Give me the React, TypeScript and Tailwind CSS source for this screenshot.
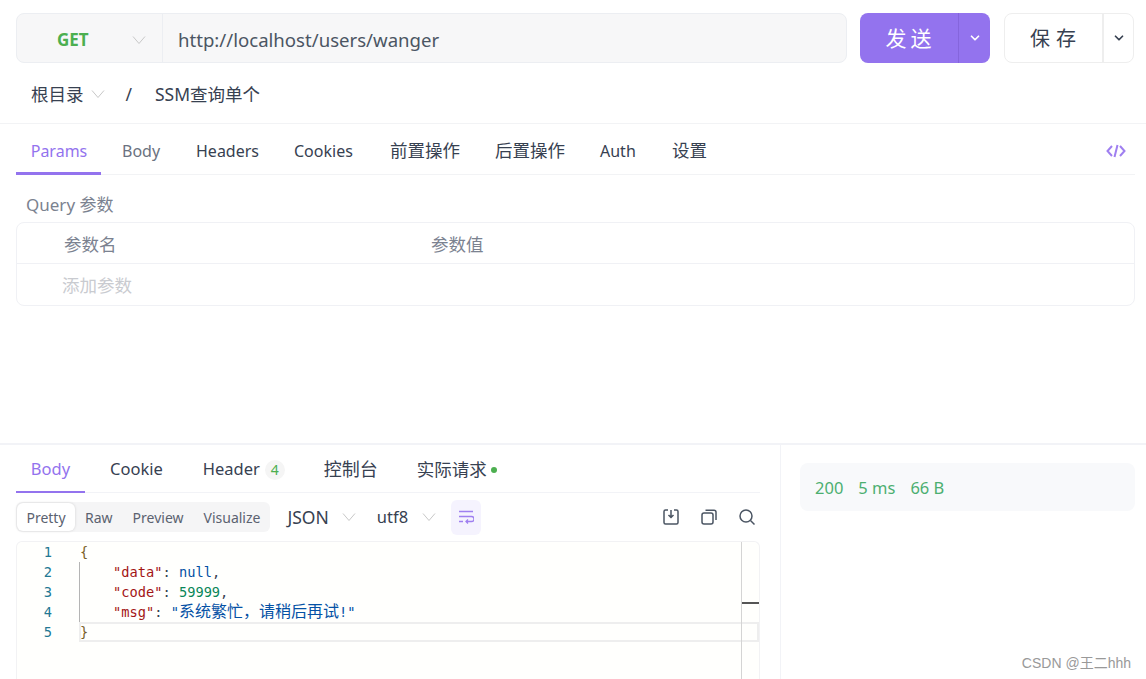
import { ChevronDown } from "lucide-react";

const font = "font-['Noto_Sans','Noto_Sans_CJK_SC',sans-serif]";

const requestTabs = [
  { label: "Body", className: "w-[74px] text-[16px] text-[#6b7280]" },
  { label: "Headers", className: "w-[98px] text-[16px]" },
  { label: "Cookies", className: "w-[96px] text-[16px]" },
  { label: "前置操作", className: "w-[105px] text-[17.500px]" },
  { label: "后置操作", className: "w-[105px] text-[17.500px]" },
  { label: "Auth", className: "w-[72px] text-[16px]" },
  { label: "设置", className: "w-[70px] text-[17.500px]" },
];

function Chevron({ className }: { className: string }) {
  return (
    <svg viewBox="0 0 14 10" fill="none" stroke="currentColor" strokeWidth="1" className={className}>
      <path d="M1 1.500 7 8.500 13 1.500" />
    </svg>
  );
}

function CodeLine({ n, children, guide }: { n: number; children?: React.ReactNode; guide?: boolean }) {
  return (
    <div className="flex h-5 items-center">
      <span className="w-[35px] text-right text-[#237893]">{n}</span>
      <span className={`ml-[27px] h-5 border-l whitespace-pre ${guide ? "border-[#b4b4b4]" : "border-transparent"}`}>{children}</span>
    </div>
  );
}

export default function App() {
  return (
    <div className={`${font} relative h-[679px] w-[1146px] overflow-hidden bg-white text-[#374151]`}>
      {/* Top bar */}
      <div className="flex gap-[13px] pl-4 pr-3 pt-[13px]">
        <div className="flex h-[50px] w-[831px] items-center rounded-lg border border-[#eceef2] bg-[#f7f7f8]">
          <div className="flex h-full w-[146px] shrink-0 items-center border-r border-[#eceef2] pt-[3px]">
            <span className="ml-[40px] text-[17px] font-bold text-[#4caf50]">GET</span>
            <Chevron className="ml-[43px] h-[10px] w-[14px] text-[#c8c8c8]" />
          </div>
          <span className="pl-[15px] pt-[3px] text-[18.600px] text-[#4b5563]">http://localhost/users/wanger</span>
        </div>
        <div className="flex h-[50px] w-[130px] rounded-lg bg-[#9373ee] text-white">
          <div className="flex w-[99px] items-center justify-center border-r border-[#8565dc] pl-[3px] pt-px text-[21px] tracking-[4px]">发送</div>
          <div className="flex flex-1 items-center justify-center">
            <ChevronDown size={14} strokeWidth={3} />
          </div>
        </div>
        <div className="ml-px flex h-[50px] w-[130px] rounded-lg border border-[#eeeeee]">
          <div className="flex w-[99px] items-center justify-center border-r-2 border-[#eeeeee] pl-[5px] pt-px text-[20px] tracking-[6px]">保存</div>
          <div className="flex flex-1 items-center justify-center">
            <ChevronDown size={14} strokeWidth={3} />
          </div>
        </div>
      </div>

      {/* Breadcrumb */}
      <div className="flex h-[61px] items-center border-b border-[#f2f3f5] pl-[31px] pt-[2px] text-[17.500px]">
        <span>根目录</span>
        <Chevron className="ml-[7px] h-[10px] w-[14px] text-[#c8c8c8]" />
        <span className="ml-[21px]">/</span>
        <span className="ml-[23px]">SSM查询单个</span>
      </div>

      {/* Request tabs */}
      <div className="ml-4 mr-[11px] flex h-[51px] items-center border-b border-[#f2f3f5] pt-[3px]">
        <div className="-mb-px -mt-[3px] flex h-[51px] w-[85px] items-center justify-center border-b-[3px] border-[#9373ee] pl-px pt-[5px] text-[16px] text-[#9373ee]">Params</div>
        <div className="flex items-center pl-[21px]">
          {requestTabs.map((tab) => (
            <span key={tab.label} className={tab.className}>{tab.label}</span>
          ))}
        </div>
        <svg viewBox="0 0 20 14" fill="none" stroke="#9f7ff0" strokeWidth="2" className="ml-auto mr-[9px] h-[14px] w-5">
          <path d="M6 2 1.500 7 6 12M14 2l4.500 5L14 12M11.500 1 8.500 13" />
        </svg>
      </div>

      {/* Query params */}
      <div className="pl-4 pr-[11px]">
        <div className="flex h-[47px] items-end pb-[5px] pl-[10px] text-[17px] text-[#7b8290]">Query 参数</div>
        <div className="h-[84px] rounded-lg border border-[#f0f1f5] text-[17.500px]">
          <div className="flex h-[41px] items-center border-b border-[#f0f1f5] pl-[47px] pt-[3px] text-[#7b8290]">
            <span className="w-[367px]">参数名</span>
            <span>参数值</span>
          </div>
          <div className="flex h-[41px] items-center pl-[45px] pt-[2px] text-[#c9cbd0]">添加参数</div>
        </div>
      </div>

      {/* Response */}
      <div className="mt-[137px] flex h-[236px] border-t-2 border-[#f2f3f7]">
        <div className="w-[781px] shrink-0 border-r border-[#f2f3f7] pl-4 pr-5">
          <div className="flex h-[48px] items-center border-b border-[#f2f3f7] pt-[2px] text-[16.500px]">
            <div className="-mb-px -mt-[2px] flex h-[48px] w-[69px] items-center justify-center border-b-2 border-[#9373ee] pt-[2px] text-[#9373ee]">Body</div>
            <span className="ml-[25px]">Cookie</span>
            <span className="ml-10">Header</span>
            <span className="ml-[5px] flex h-5 w-5 items-center justify-center rounded-full bg-[#f5f5f5] text-[14px] text-[#4caf50]">4</span>
            <span className="ml-[39px] text-[18px]">控制台</span>
            <span className="ml-[39px] text-[17.500px]">实际请求</span>
            <span className="ml-1 h-[6px] w-[6px] rounded-full bg-[#4caf50]" />
          </div>

          <div className="flex h-[48px] items-center">
            <div className="flex h-[30px] items-center rounded-md bg-[#f5f5f6] text-[14px] text-[#5b6270]">
              <span className="ml-px flex h-7 w-[58px] items-center justify-center rounded-md bg-white shadow-[0_0_3px_rgba(0,0,0,0.15)]">Pretty</span>
              <span className="ml-[10px]">Raw</span>
              <span className="ml-5">Preview</span>
              <span className="ml-5 mr-[10px]">Visualize</span>
            </div>
            <span className="ml-[17px] text-[17.500px]">JSON</span>
            <Chevron className="ml-[13px] h-[10px] w-[14px] text-[#c8c8c8]" />
            <span className="ml-[21px] text-[16.500px]">utf8</span>
            <Chevron className="ml-[14px] h-[10px] w-[14px] text-[#c8c8c8]" />
            <div className="ml-[15px] flex h-[35px] w-[30px] items-center justify-center rounded-md bg-[#f5f3fe]">
              <svg viewBox="0 0 16 14" fill="none" stroke="#9f7ff0" strokeWidth="1.300" className="h-[14px] w-4">
                <path d="M1 1.500h14M1 6.500h12.500a2.200 2.200 0 0 1 0 5H8M10 9.500l-2 2 2 2M1 11.500h4" />
              </svg>
            </div>
            <div className="ml-auto flex items-center gap-[22px] pr-[5px] text-[#4b5563]">
              <svg viewBox="0 0 16 16" fill="none" stroke="currentColor" strokeWidth="1.500" className="h-4 w-4">
                <path d="M5 1H2.500A1.500 1.500 0 0 0 1 2.500v11A1.500 1.500 0 0 0 2.500 15h11a1.500 1.500 0 0 0 1.500-1.500v-11A1.500 1.500 0 0 0 13.500 1H11M8 1v7M5.500 6 8 8.500 10.500 6" />
              </svg>
              <svg viewBox="0 0 16 16" fill="none" stroke="currentColor" strokeWidth="1.500" className="h-4 w-4">
                <rect x="1" y="4" width="11" height="11" rx="2" />
                <path d="M4.500 1.200H13a2 2 0 0 1 2 2V11" />
              </svg>
              <svg viewBox="0 0 16 16" fill="none" stroke="currentColor" strokeWidth="1.500" className="h-4 w-4">
                <circle cx="7" cy="7" r="6" />
                <path d="m11.500 11.500 4 4" />
              </svg>
            </div>
          </div>

          {/* Code editor */}
          <div className="relative h-[141px] overflow-hidden rounded-t-md border border-b-0 border-[#f2f2f4] bg-[#fffffd] font-['DejaVu_Sans_Mono','Noto_Sans_CJK_SC',monospace] text-[13.700px] leading-5">
            <CodeLine n={1}><span className="text-[#795e26]">{"{"}</span></CodeLine>
            <CodeLine n={2} guide>
              {"    "}<span className="text-[#a31515]">"data"</span>: <span className="text-[#0451a5]">null</span>,
            </CodeLine>
            <CodeLine n={3} guide>
              {"    "}<span className="text-[#a31515]">"code"</span>: <span className="text-[#098658]">59999</span>,
            </CodeLine>
            <CodeLine n={4} guide>
              {"    "}<span className="text-[#a31515]">"msg"</span>: <span className="text-[#0451a5]">"<span className="text-[16px]">系统繁忙，请稍后再试</span>!"</span>
            </CodeLine>
            <CodeLine n={5}><span className="text-[#795e26]">{"}"}</span></CodeLine>
            {/* current line highlight */}
            <div className="absolute left-[62px] right-0 top-[80px] h-5 border-2 border-[#eeeeee]" />
            {/* scrollbar overview ruler */}
            <div className="absolute bottom-0 right-0 top-0 w-[18px] border-l border-[#d4d4d4]" />
            <div className="absolute right-0 top-[60px] h-[2px] w-[17px] bg-[#555555]" />
          </div>
        </div>

        <div className="flex-1 pl-[19px] pr-[11px] pt-[18px]">
          <div className="flex h-[48px] items-center gap-[15px] rounded-lg bg-[#f8f9fb] pl-[15px] pt-[2px] text-[16.500px] text-[#4caf70]">
            <span>200</span>
            <span>5 ms</span>
            <span>66 B</span>
          </div>
        </div>
      </div>

      {/* Watermark */}
      <span className="absolute bottom-[5px] right-[15px] font-['Liberation_Sans','Noto_Sans_CJK_SC',sans-serif] text-[14px] text-[#999999]">CSDN @王二hhh</span>
    </div>
  );
}
